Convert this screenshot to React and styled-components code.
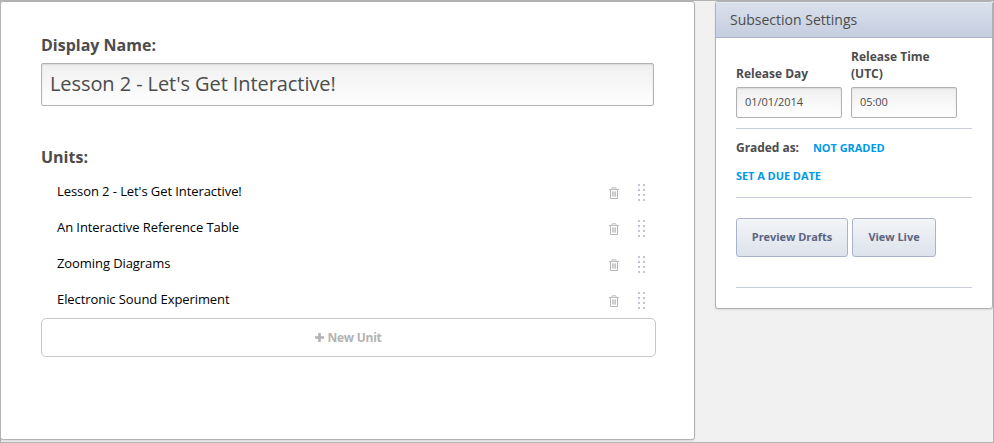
import React from "react";
import styled, { createGlobalStyle } from "styled-components";

const GlobalStyle = createGlobalStyle`
  *, *::before, *::after { box-sizing: border-box; }
  body {
    margin: 0;
    background: #f1f1f1;
    color: #4c4c4c;
    font-family: "Open Sans", "Noto Sans", sans-serif;
  }
  input, button { font-family: inherit; }
`;

const Page = styled.div`
  display: flex;
  align-items: flex-start;
  justify-content: space-between;
  height: 443px;
  border: 1px solid #b2b2b2;
  background: #f1f1f1;
`;

const Card = styled.section`
  background: #fff;
  border: 1px solid #b2b2b2;
  border-radius: 3px;
  box-shadow: 0 1px 2px rgba(0, 0, 0, 0.1);
`;

const MainCard = styled(Card)`
  width: 695px;
  height: 439px;
  margin-left: -1px;
  padding: 32px 38px 0 40px;
`;

const SideCard = styled(Card)`
  width: 278px;
  height: 308px;
`;

const Heading = styled.h2`
  margin: 0;
  height: 22px;
  font-size: 16px;
  line-height: 22px;
  font-weight: 700;
`;

const TextInput = styled.input`
  display: block;
  width: ${(p) => (p.$large ? 613 : 106)}px;
  height: ${(p) => (p.$large ? 43 : 31)}px;
  margin: 0;
  padding: ${(p) => (p.$large ? "0 8px 2px" : "0 8px 2px")};
  border: 1px solid #b2b2b2;
  border-radius: 2px;
  outline: none;
  background: linear-gradient(#f0f0f0, #fdfdfd 90%);
  box-shadow: inset 0 1px 2px rgba(0, 0, 0, 0.1);
  color: #4c4c4c;
  font-size: ${(p) => (p.$large ? 20 : 11)}px;
  letter-spacing: ${(p) => (p.$large ? "-0.08px" : "-0.05px")};
`;

const NameField = styled.div`
  display: grid;
  gap: 7px;
  margin-bottom: 40px;
`;

const UnitList = styled.ul`
  list-style: none;
  margin: 5px 0 0;
  padding: 0;
`;

const UnitRow = styled.li`
  display: flex;
  align-items: center;
  height: 36px;
  padding: 0 10px 0 16px;
  color: #000;
  font-size: 13px;
  letter-spacing: -0.08px;
`;

const UnitName = styled.span`
  flex: 1;
  line-height: 18px;
`;

const TrashGlyph = styled.svg`
  display: block;
  width: 12px;
  height: 14px;
  margin: 4px 18px 0 0;
`;

const DragHandle = styled.svg`
  display: block;
  width: 8px;
  height: 18px;
  margin-top: 4px;
`;

const NewUnitButton = styled.button`
  display: flex;
  align-items: center;
  justify-content: center;
  gap: 3px;
  width: 615px;
  height: 39px;
  margin: 1px 0 0;
  padding: 0;
  border: 1px solid #c8c8c8;
  border-radius: 5px;
  background: #fff;
  color: #b2b2b2;
  font-size: 12px;
  font-weight: 700;
  letter-spacing: -0.25px;
`;

const SideHeader = styled.h3`
  display: flex;
  align-items: center;
  height: 36px;
  margin: 0;
  padding: 0 14px;
  border-bottom: 1px solid #a9b3c9;
  border-radius: 2px 2px 0 0;
  background: linear-gradient(#dae1ec, #c5cee0);
  box-shadow: inset 0 1px 0 #e6ebf3;
  font-size: 14px;
  font-weight: 400;
`;

const SideBody = styled.div`
  padding: 0 20px;
`;

const ReleaseRow = styled.div`
  display: flex;
  align-items: flex-end;
  gap: 9px;
  height: 91px;
  padding-bottom: 10px;
  border-bottom: 1px solid #c8cddb;
`;

const Field = styled.label`
  display: grid;
  gap: 5px;
  width: 106px;
  font-size: 12px;
  line-height: 17px;
  font-weight: 700;
`;

const Grading = styled.div`
  height: 69px;
  padding-top: 9px;
  border-bottom: 1px solid #c8cddb;
`;

const GradeLine = styled.div`
  display: flex;
  align-items: center;
  gap: 14px;
  height: 18px;
  margin-bottom: 10px;
  font-size: 12px;
  font-weight: 700;
  letter-spacing: -0.05px;
`;

const ActionLink = styled.a`
  color: #0099e8;
  font-size: 11px;
  font-weight: 700;
  text-transform: uppercase;
`;

const Actions = styled.div`
  display: flex;
  gap: 4px;
  height: 90px;
  padding-top: 20px;
  border-bottom: 1px solid #c8cddb;
`;

const ActionButton = styled.button`
  width: ${(p) => p.$width}px;
  height: 39px;
  padding: 0 0 2px;
  border: 1px solid #a9b3c9;
  border-radius: 3px;
  background: linear-gradient(#f2f5f8, #dde2ec);
  box-shadow: inset 0 1px 0 rgba(255, 255, 255, 0.3);
  color: #5d6480;
  font-size: 11px;
  font-weight: 700;
  letter-spacing: -0.05px;
`;

const Trash = () => (
  <TrashGlyph viewBox="0 0 12 14" fill="none">
    <path d="M4 3V1.8H8V3" stroke="#bdbdbd" />
    <path d="M1 3.5H11" stroke="#bcbcbc" />
    <path d="M2.5 4V12.5H9.5V4" stroke="#b5b5b5" />
    <path d="M4 5.5H8V10.5H4Z" fill="#e4e4e4" />
    <path d="M4.5 5.5V10.5M6 5.5V10.5M7.5 5.5V10.5" stroke="#bcbcbc" strokeWidth="0.8" />
  </TrashGlyph>
);

const Handle = () => (
  <DragHandle viewBox="0 0 8 18" fill="#c0c6d6">
    {[0, 5, 10, 15].map((y) => (
      <React.Fragment key={y}>
        <rect x="0" y={y} width="2" height="2" />
        <rect x="5" y={y} width="2" height="2" />
      </React.Fragment>
    ))}
  </DragHandle>
);

const PlusIcon = () => (
  <svg width="9" height="9" viewBox="0 0 9 9">
    <path d="M4.5 0V9M0 4.5H9" stroke="#b2b2b2" strokeWidth="2.6" />
  </svg>
);

const units = [
  "Lesson 2 - Let's Get Interactive!",
  "An Interactive Reference Table",
  "Zooming Diagrams",
  "Electronic Sound Experiment",
];

export default function App() {
  return (
    <>
      <GlobalStyle />
      <Page>
        <MainCard>
          <NameField>
            <Heading as="label" htmlFor="display-name">Display Name:</Heading>
            <TextInput $large id="display-name" defaultValue="Lesson 2 - Let's Get Interactive!" />
          </NameField>
          <Heading>Units:</Heading>
          <UnitList>
            {units.map((name) => (
              <UnitRow key={name}>
                <UnitName>{name}</UnitName>
                <Trash />
                <Handle />
              </UnitRow>
            ))}
          </UnitList>
          <NewUnitButton>
            <PlusIcon />
            <span>New Unit</span>
          </NewUnitButton>
        </MainCard>
        <SideCard>
          <SideHeader>Subsection Settings</SideHeader>
          <SideBody>
            <ReleaseRow>
              <Field>
                Release Day
                <TextInput defaultValue="01/01/2014" />
              </Field>
              <Field>
                Release Time (UTC)
                <TextInput defaultValue="05:00" />
              </Field>
            </ReleaseRow>
            <Grading>
              <GradeLine>
                <span>Graded as:</span>
                <ActionLink>Not Graded</ActionLink>
              </GradeLine>
              <GradeLine>
                <ActionLink>Set a due date</ActionLink>
              </GradeLine>
            </Grading>
            <Actions>
              <ActionButton $width={112}>Preview Drafts</ActionButton>
              <ActionButton $width={84}>View Live</ActionButton>
            </Actions>
          </SideBody>
        </SideCard>
      </Page>
    </>
  );
}
